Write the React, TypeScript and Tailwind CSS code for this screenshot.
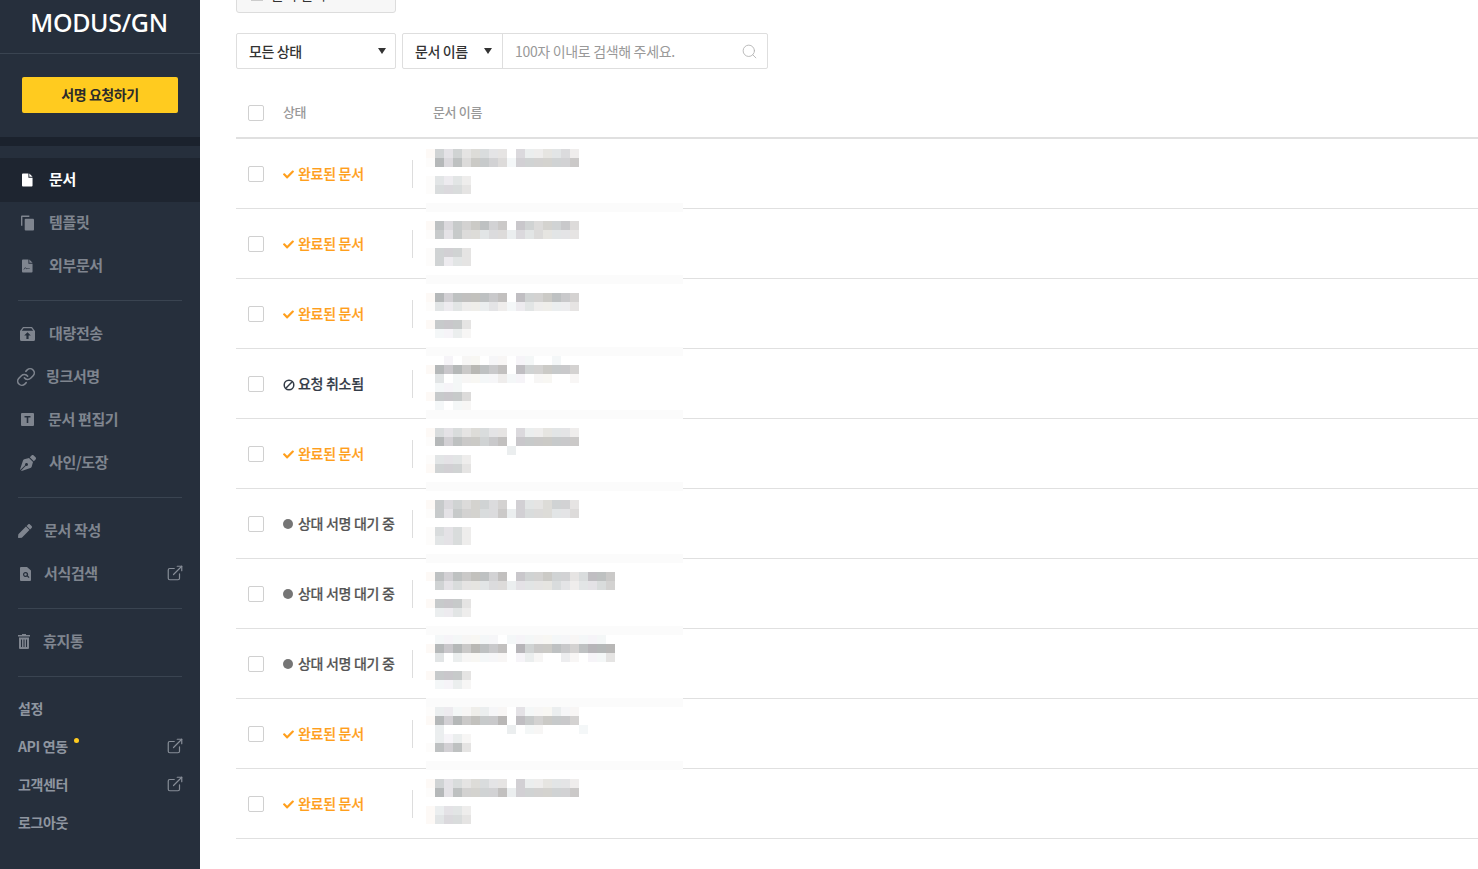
import { ExternalLink, Link, Search } from 'lucide-react';
import { FaCheck, FaPen, FaPenNib } from 'react-icons/fa';
import type { ReactNode } from 'react';

const FONT = 'font-["Noto_Sans_CJK_KR","Noto_Sans",sans-serif]';

// sidebar icons
const FileIcon = ({ className }: { className: string }) => (
    <svg viewBox="0 0 12 14" className={className} fill="currentColor">
        <path d="M1 0h6v4.5h4.5V13a1 1 0 0 1-1 1H1a1 1 0 0 1-1-1V1a1 1 0 0 1 1-1z" />
        <path d="M8 0l3.5 3.5H8z" />
    </svg>
);

const TemplateIcon = ({ className }: { className: string }) => (
    <svg viewBox="0 0 14 16" className={className} fill="currentColor">
        <path d="M1 0h8v1.5H1.5V11H0V1a1 1 0 0 1 1-1z" />
        <path d="M5 3.5h8a1 1 0 0 1 1 1V15a1 1 0 0 1-1 1H5a1 1 0 0 1-1-1V4.5a1 1 0 0 1 1-1z" />
    </svg>
);

const SignedFileIcon = ({ className }: { className: string }) => (
    <svg viewBox="0 0 12 14" className={className} fill="currentColor">
        <path
            fillRule="evenodd"
            d="M1 0h6v4.5h4.5V13a1 1 0 0 1-1 1H1a1 1 0 0 1-1-1V1a1 1 0 0 1 1-1zm1 11.2l1.6-2 1.4 1.4 1-.8 2.5.6v-.7l-2.7-.6-.8.7-1.5-1.5L1.7 10.500z"
        />
        <path d="M8 0l3.500 3.500H8z" />
    </svg>
);

const ArchiveIcon = ({ className }: { className: string }) => (
    <svg viewBox="0 0 15 14" className={className} fill="currentColor">
        <path
            fillRule="evenodd"
            d="M3 0h9l3 4v8.500a1.500 1.500 0 0 1-1.500 1.500h-12A1.500 1.500 0 0 1 0 12.500V4zm.6 1.300L1.800 3.800h11.400l-1.800-2.500zM7.500 5.200L4.200 8.600h2.200V12h2.200V8.600h2.200z"
        />
    </svg>
);

const TextBoxIcon = ({ className }: { className: string }) => (
    <svg viewBox="0 0 13 13" className={className} fill="currentColor">
        <path
            fillRule="evenodd"
            d="M1 0h11a1 1 0 0 1 1 1v11a1 1 0 0 1-1 1H1a1 1 0 0 1-1-1V1a1 1 0 0 1 1-1zm2.500 3v1.500h2.200V10h1.600V4.500h2.200V3z"
        />
    </svg>
);

const SearchFileIcon = ({ className }: { className: string }) => (
    <svg viewBox="0 0 11 14" className={className} fill="currentColor">
        <path
            fillRule="evenodd"
            d="M1 0h6l4 3.500V13a1 1 0 0 1-1 1H1a1 1 0 0 1-1-1V1a1 1 0 0 1 1-1zm4.500 5A2.500 2.500 0 1 0 7 9.500l1.600 1.600.9-.9L7.900 8.600A2.500 2.500 0 0 0 5.500 5zm0 1.200a1.300 1.300 0 1 1 0 2.600 1.300 1.300 0 0 1 0-2.600z"
        />
    </svg>
);

const TrashIcon = ({ className }: { className: string }) => (
    <svg viewBox="0 0 12 15" className={className} fill="currentColor">
        <path d="M4 0h4v1h4v1.500H0V1h4z" />
        <path
            fillRule="evenodd"
            d="M1 3.500h10V14a1 1 0 0 1-1 1H2a1 1 0 0 1-1-1zM3 5.500V13h1V5.500zm2.500 0V13h1V5.500zm2.500 0V13h1V5.500z"
        />
    </svg>
);

type NavItem = { label: string; icon: ReactNode; gutter: string };

const group1: NavItem[] = [
    { label: '템플릿', gutter: 'w-[31px]', icon: <TemplateIcon className="ml-[3px] h-[16px] w-[13px]" /> },
    { label: '외부문서', gutter: 'w-[31px]', icon: <SignedFileIcon className="ml-[4px] h-[14px] w-[11px]" /> },
];
const group2: NavItem[] = [
    { label: '대량전송', gutter: 'w-[31px]', icon: <ArchiveIcon className="ml-[2px] h-[14px] w-[15px]" /> },
    { label: '링크서명', gutter: 'w-[28px]', icon: <Link className="-ml-[2px] h-[20px] w-[20px]" strokeWidth={1.9} /> },
    { label: '문서 편집기', gutter: 'w-[30px]', icon: <TextBoxIcon className="ml-[3px] h-[13px] w-[13px]" /> },
    { label: '사인/도장', gutter: 'w-[31px]', icon: <FaPenNib className="ml-[2px] h-[16px] w-[16px]" /> },
];
const group3: NavItem[] = [
    { label: '문서 작성', gutter: 'w-[26px]', icon: <FaPen className="h-[14px] w-[14px]" /> },
    { label: '서식검색', gutter: 'w-[26px]', icon: <SearchFileIcon className="ml-[2px] h-[14px] w-[11px]" /> },
];

const OutLink = () => <ExternalLink className="-mr-[2px] h-[18px] w-[18px] text-[#878d97]" strokeWidth={1.6} />;

const NavRow = ({ item, external }: { item: NavItem; external?: boolean }) => (
    <div className="flex h-[43px] items-center pb-[2px] pl-[18px] pr-[18px] text-[15px] font-semibold tracking-[-0.35px] text-[#7f858f]">
        <span className={`${item.gutter} flex shrink-0 items-center`}>{item.icon}</span>
        <span className="flex-1">{item.label}</span>
        {external && <span className="mb-[2px]"><OutLink /></span>}
    </div>
);

const Divider = () => <div className="mx-[18px] my-[12px] h-px bg-[#3a4451]" />;

const SettingRow = ({ label, external, dot }: { label: string; external?: boolean; dot?: boolean }) => (
    <div className="flex h-[38px] items-center pl-[18px] pr-[18px] text-[14px] font-semibold tracking-[-0.35px] text-[#8f96a0]">
        <span className="relative">
            {label}
            {dot && <span className="absolute -right-[11px] top-[2px] h-[5px] w-[5px] rounded-full bg-[#ffcb1f]" />}
        </span>
        <span className="flex-1" />
        {external && <OutLink />}
    </div>
);

const Sidebar = () => (
    <aside className="h-[869px] w-[200px] shrink-0 bg-[#262f3c]">
        <div className="flex h-[54px] items-start justify-center border-b border-[#3a4451]">
            <span className='mt-[4px] mr-[2px] font-["Noto_Sans",sans-serif] text-[25px] font-medium leading-[36px] tracking-[-0.35px] text-white'>
                MODUS/GN
            </span>
        </div>
        <div className="h-[83px] px-[22px] pt-[23px]">
            <button className="h-[36px] w-full rounded-[2px] bg-[#ffcb1f] pb-[2px] text-[14px] font-semibold tracking-[-0.45px] text-[#2b2b2b]">
                서명 요청하기
            </button>
        </div>
        <div className="h-[9px] bg-[#1b222d]" />
        <div className="mt-[12px] flex h-[44px] items-center bg-[#1e2530] pb-[1px] pl-[22px] text-[15px] font-bold tracking-[-0.35px] text-white">
            <FileIcon className="h-[14px] w-[11px] shrink-0" />
            <span className="ml-[16px] pb-[1px]">문서</span>
        </div>
        {group1.map((item) => <NavRow key={item.label} item={item} />)}
        <Divider />
        {group2.map((item) => <NavRow key={item.label} item={item} />)}
        <Divider />
        {group3.map((item) => <NavRow key={item.label} item={item} external={item.label === '서식검색'} />)}
        <Divider />
        <NavRow item={{ label: '휴지통', gutter: 'w-[25px]', icon: <TrashIcon className="h-[15px] w-[12px]" /> }} />
        <Divider />
        <SettingRow label="설정" />
        <SettingRow label="API 연동" external dot />
        <SettingRow label="고객센터" external />
        <SettingRow label="로그아웃" />
    </aside>
);

type Status = 'done' | 'cancel' | 'wait';

const rows: Status[] = ['done', 'done', 'done', 'cancel', 'done', 'wait', 'wait', 'wait', 'done', 'done'];

const StatusLabel = ({ status }: { status: Status }) => {
    if (status === 'done') {
        return (
            <span className="flex items-center text-[#ff9f1c]">
                <FaCheck className="mr-[4px] mt-[2px] h-[11px] w-[11px]" />
                완료된 문서
            </span>
        );
    }
    if (status === 'cancel') {
        return (
            <span className="flex items-center text-[#333b47]">
                <svg viewBox="0 0 12 12" className="mr-[3px] mt-[2px] h-[12px] w-[12px]" fill="none" stroke="currentColor" strokeWidth="1.500">
                    <circle cx="6" cy="6" r="4.800" />
                    <path d="M2.800 9.200L9.200 2.800" />
                </svg>
                요청 취소됨
            </span>
        );
    }
    return (
        <span className="flex items-center text-[#555]">
            <span className="mr-[5px] h-[10px] w-[10px] rounded-full bg-[#757575]" />
            상대 서명 대기 중
        </span>
    );
};

const Checkbox = () => <span className="block h-[16px] w-[16px] shrink-0 rounded-[2px] border border-[#d0d0d0] bg-white" />;

// 문서 이름은 모자이크 처리되어 있음: 9px 격자, 숫자가 클수록 진함, ~ . 은 아주 옅은 칸, _ 는 띠
const mosaic: Record<number, string> = {
    0: '~53534433 4223342',
    1: '.84746654155555560',
    3: '.3232',
    4: '.4443',
    6: '_',
    8: '~74656756 6545564',
    9: '.63644344243433330',
    11: '.5553',
    12: '.5233',
    14: '_',
    16: '~85777767 7556765',
    17: '.32322232123222230',
    19: '~6663',
    20: ' 1121',
    22: '_',
    23: '  1011011 1100100',
    24: '~86868767 7556665',
    25: ' 30111112110110010',
    26: ' 1110',
    27: '~6664',
    28: ' 1011',
    29: '_',
    31: '~43434433 4223332',
    32: '.85766567 6666666',
    33: '         2',
    34: '.3332',
    35: '~5553',
    37: '_',
    39: '~64545545 5334553',
    40: '.63655446254443340',
    42: '.4342',
    43: '.3342',
    45: '_',
    47: '~75767757 65565534776',
    48: ' 53433344233334323345',
    50: '~6663',
    51: ' 2232',
    53: '_',
    54: ' 1111111 11111111111',
    55: '~86868767 85667657888',
    56: ' 30211111 1210021 113',
    58: '~6663',
    59: ' 1121',
    61: '_',
    62: '.22112211 3111211',
    63: '~85867668 7656665',
    64: ' 20000000201100 01',
    65: ' 2121',
    66: '.7573',
    68: '_',
    70: '~53434433 5223332',
    71: '.83755557255555560',
    73: '~2332',
    74: '~3443',
};

const tints = [[2, 0, -1], [-2, 1, 2], [0, -2, 2], [-2, 1, 1], [1, 0, -1], [2, 1, -3], [-2, 1, 2], [0, 0, 2]];

const cellColor = (ch: string, col: number) => {
    if (ch === '~') return '#fdf9f6';
    if (ch === '.') return '#fdfcfb';
    const grey = 255 - Number(ch) * 9;
    const t = tints[col % tints.length];
    return `rgb(${grey + t[0]},${grey + t[1]},${grey + t[2]})`;
};

const Mosaic = () => (
    <div className="absolute left-[190px] top-[10px] w-[257px] overflow-hidden">
        {Array.from({ length: 75 }, (_, i) => {
            const line = mosaic[i];
            if (line === '_') return <div key={i} className="h-[9px] bg-[#fbfbfb]" />;
            return (
                <div key={i} className="flex h-[9px]">
                    {line?.split('').map((ch, col) => (
                        <span
                            key={col}
                            className="h-[9px] w-[9px] shrink-0"
                            style={ch === ' ' || ch === '0' ? undefined : { backgroundColor: cellColor(ch, col) }}
                        />
                    ))}
                </div>
            );
        })}
    </div>
);

export default function App() {
    return (
        <div className={`flex h-[869px] w-full overflow-hidden bg-white ${FONT}`}>
            <Sidebar />
            <main className="min-w-0 flex-1 pl-[36px]">
                <div className="-mt-[24px] flex h-[37px] w-[160px] items-center gap-[8px] rounded-[3px] border border-[#dcdcdc] bg-[#f7f7f7] pl-[14px] text-[14px] text-[#333]">
                    <span className="h-[12px] w-[12px] bg-[#cccccc]" />
                    문서 선택
                </div>

                <div className="mt-[20px] flex h-[36px] text-[14px] font-medium tracking-[-0.4px] text-[#333]">
                    <div className="flex w-[160px] items-center justify-between rounded-[2px] border border-[#dedede] pl-[12px] pr-[9px]">
                        모든 상태
                        <span className="h-0 w-0 border-x-[4px] border-t-[6px] border-x-transparent border-t-[#333]" />
                    </div>
                    <div className="ml-[6px] flex w-[366px] rounded-[2px] border border-[#dedede]">
                        <div className="flex w-[100px] items-center justify-between border-r border-[#dedede] pl-[12px] pr-[10px]">
                            문서 이름
                            <span className="h-0 w-0 border-x-[4px] border-t-[6px] border-x-transparent border-t-[#333]" />
                        </div>
                        <div className="flex flex-1 items-center justify-between pl-[12px] pr-[9px] font-normal tracking-[-0.33px] text-[#999]">
                            100자 이내로 검색해 주세요.
                            <Search className="h-[17px] w-[17px] text-[#b0b0b0]" strokeWidth={1.2} />
                        </div>
                    </div>
                </div>

                <div className="mt-[23px] flex h-[47px] items-center border-b-2 border-[#e0e0e0] pb-[3px] text-[13px] font-medium tracking-[-0.35px] text-[#999]">
                    <span className="ml-[12px]"><Checkbox /></span>
                    <span className="ml-[19px] w-[150px] pb-[2px]">상태</span>
                    <span className="pb-[2px]">문서 이름</span>
                </div>

                <div className="relative">
                    {rows.map((status, i) => (
                        <div key={i} className="flex h-[70px] items-center border-b border-[#e0e0e0] text-[14px] font-medium tracking-[-0.3px] [-webkit-text-stroke:0.2px]">
                            <span className="ml-[12px]"><Checkbox /></span>
                            <div className="ml-[19px] w-[129px]">
                                <StatusLabel status={status} />
                            </div>
                            <span className="h-[28px] w-px bg-[#dddddd]" />
                        </div>
                    ))}
                    <Mosaic />
                </div>
            </main>
        </div>
    );
}
